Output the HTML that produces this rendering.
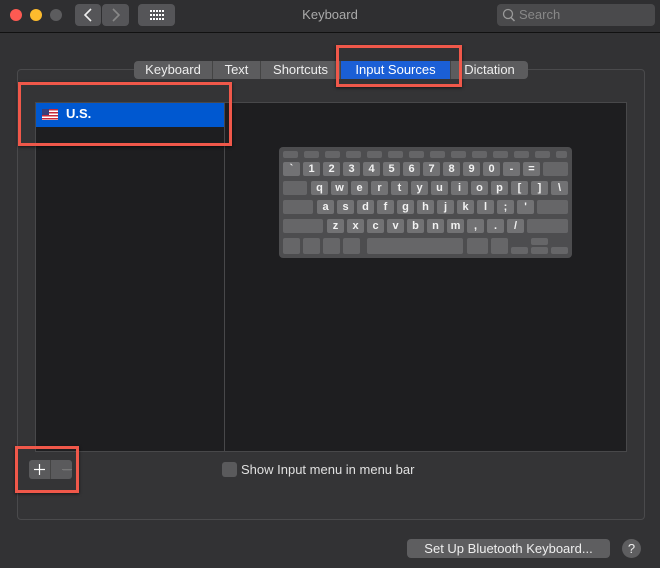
<!DOCTYPE html>
<html><head><meta charset="utf-8"><style>
*{box-sizing:border-box;margin:0;padding:0}
body{width:660px;height:568px;background:#323234;font-family:"Liberation Sans",sans-serif;position:relative;overflow:hidden;color:#ddd}
.a{position:absolute}
.tb{left:0;top:0;width:660px;height:33px;background:#2f2f31;border-bottom:1px solid #111}
.dot{width:12px;height:12px;border-radius:50%;top:9px}
.btn{background:#555558;border-radius:4px}
.panel{left:17px;top:69px;width:628px;height:451px;border:1px solid #4a4a4c;border-radius:4px;background:#343436}
.tabs{left:134px;top:61px;height:18px;display:flex;border-radius:4px;overflow:hidden;background:#5c5c5e;font-size:13px;color:#eee}
.tabs div{height:18px;line-height:18px;text-align:center;border-right:1px solid #444}
.red{border:3px solid #f0584a;box-shadow:0 1px 3px rgba(0,0,0,.6)}
.kb{left:279px;top:147px;width:293px;height:111px;background:#4d4d4f;border-radius:4px}
.k{position:absolute;height:14px;background:#727274;border-radius:2px;color:#f2f2f2;font-size:11px;font-weight:bold;text-align:center;line-height:14px;width:17px}
.f{height:7px;top:4px;width:15px;background:#656567}
</style></head><body>
<div class="a tb"></div>
<div class="a dot" style="left:10px;background:#fd5a52"></div>
<div class="a dot" style="left:30px;background:#fdbb2d"></div>
<div class="a dot" style="left:50px;background:#5c5c5e"></div>
<div class="a btn" style="left:75px;top:4px;width:26px;height:22px"></div>
<div class="a btn" style="left:102px;top:4px;width:27px;height:22px"></div>
<svg class="a" style="left:75px;top:4px" width="54" height="22"><polyline points="16,5 10,11 16,17" stroke="#eee" stroke-width="1.6" fill="none"/><polyline points="38,5 44,11 38,17" stroke="#888" stroke-width="1.6" fill="none"/></svg>
<div class="a btn" style="left:138px;top:4px;width:37px;height:22px"></div>
<svg class="a" style="left:150px;top:10px" width="14" height="10" fill="#fff"><g>
<rect x="0" y="0" width="2" height="2"/><rect x="3" y="0" width="2" height="2"/><rect x="6" y="0" width="2" height="2"/><rect x="9" y="0" width="2" height="2"/><rect x="12" y="0" width="2" height="2"/>
<rect x="0" y="4" width="2" height="2"/><rect x="3" y="4" width="2" height="2"/><rect x="6" y="4" width="2" height="2"/><rect x="9" y="4" width="2" height="2"/><rect x="12" y="4" width="2" height="2"/>
<rect x="0" y="8" width="2" height="2"/><rect x="3" y="8" width="2" height="2"/><rect x="6" y="8" width="2" height="2"/><rect x="9" y="8" width="2" height="2"/><rect x="12" y="8" width="2" height="2"/></g></svg>
<div class="a" style="left:280px;top:7px;width:100px;text-align:center;font-size:13px;color:#aaa">Keyboard</div>
<div class="a" style="left:497px;top:4px;width:158px;height:22px;background:#4a4a4c;border-radius:4px"></div>
<svg class="a" style="left:502px;top:8px" width="14" height="14"><circle cx="6" cy="6" r="4.5" stroke="#999" stroke-width="1.3" fill="none"/><line x1="9" y1="9.5" x2="12.5" y2="13" stroke="#999" stroke-width="1.5"/></svg>
<div class="a" style="left:519px;top:7px;font-size:13px;color:#888">Search</div>

<div class="a panel"></div>
<div class="a tabs">
<div style="width:79px">Keyboard</div><div style="width:48px">Text</div><div style="width:80px">Shortcuts</div><div style="width:110px;background:#1b5fd6;color:#fff">Input Sources</div><div style="width:77px;border:none">Dictation</div>
</div>
<div class="a red" style="left:336px;top:45px;width:126px;height:42px"></div>

<div class="a" style="left:35px;top:102px;width:592px;height:350px;background:#1e1e20;border:1px solid #48484a"></div>
<div class="a" style="left:224px;top:102px;width:1px;height:350px;background:#48484a"></div>
<div class="a" style="left:36px;top:103px;width:188px;height:24px;background:#0058d0"></div>
<svg class="a" style="left:42px;top:109px" width="16" height="11"><rect width="16" height="11" fill="#fff"/><rect y="0" width="16" height="1.5" fill="#c8283a"/><rect y="3" width="16" height="1.5" fill="#c8283a"/><rect y="6" width="16" height="1.5" fill="#c8283a"/><rect y="9" width="16" height="1.5" fill="#c8283a"/><rect width="7" height="6" fill="#3a3f7a"/></svg>
<div class="a" style="left:66px;top:106px;font-size:13px;color:#fff;font-weight:bold">U.S.</div>
<div class="a red" style="left:18px;top:82px;width:214px;height:64px"></div>

<div class="a kb">
<div class="k f" style="left:4px"></div><div class="k f" style="left:25px"></div><div class="k f" style="left:46px"></div><div class="k f" style="left:67px"></div><div class="k f" style="left:88px"></div><div class="k f" style="left:109px"></div><div class="k f" style="left:130px"></div><div class="k f" style="left:151px"></div><div class="k f" style="left:172px"></div><div class="k f" style="left:193px"></div><div class="k f" style="left:214px"></div><div class="k f" style="left:235px"></div><div class="k f" style="left:256px"></div><div class="k f" style="left:277px;width:11px"></div>
<div style="position:absolute;top:15px;left:0">
<div class="k" style="left:4px">`</div><div class="k" style="left:24px">1</div><div class="k" style="left:44px">2</div><div class="k" style="left:64px">3</div><div class="k" style="left:84px">4</div><div class="k" style="left:104px">5</div><div class="k" style="left:124px">6</div><div class="k" style="left:144px">7</div><div class="k" style="left:164px">8</div><div class="k" style="left:184px">9</div><div class="k" style="left:204px">0</div><div class="k" style="left:224px">-</div><div class="k" style="left:244px">=</div><div class="k" style="left:264px;width:25px;background:#666668"></div>
</div>
<div style="position:absolute;top:34px;left:0">
<div class="k" style="left:4px;width:24px;background:#666668"></div><div class="k" style="left:32px">q</div><div class="k" style="left:52px">w</div><div class="k" style="left:72px">e</div><div class="k" style="left:92px">r</div><div class="k" style="left:112px">t</div><div class="k" style="left:132px">y</div><div class="k" style="left:152px">u</div><div class="k" style="left:172px">i</div><div class="k" style="left:192px">o</div><div class="k" style="left:212px">p</div><div class="k" style="left:232px">[</div><div class="k" style="left:252px">]</div><div class="k" style="left:272px">\</div>
</div>
<div style="position:absolute;top:53px;left:0">
<div class="k" style="left:4px;width:30px;background:#666668"></div><div class="k" style="left:38px">a</div><div class="k" style="left:58px">s</div><div class="k" style="left:78px">d</div><div class="k" style="left:98px">f</div><div class="k" style="left:118px">g</div><div class="k" style="left:138px">h</div><div class="k" style="left:158px">j</div><div class="k" style="left:178px">k</div><div class="k" style="left:198px">l</div><div class="k" style="left:218px">;</div><div class="k" style="left:238px">'</div><div class="k" style="left:258px;width:31px;background:#666668"></div>
</div>
<div style="position:absolute;top:72px;left:0">
<div class="k" style="left:4px;width:40px;background:#666668"></div><div class="k" style="left:48px">z</div><div class="k" style="left:68px">x</div><div class="k" style="left:88px">c</div><div class="k" style="left:108px">v</div><div class="k" style="left:128px">b</div><div class="k" style="left:148px">n</div><div class="k" style="left:168px">m</div><div class="k" style="left:188px">,</div><div class="k" style="left:208px">.</div><div class="k" style="left:228px">/</div><div class="k" style="left:248px;width:41px;background:#666668"></div>
</div>
<div style="position:absolute;top:91px;left:0">
<div class="k" style="left:4px;height:16px;background:#666668"></div><div class="k" style="left:24px;height:16px;background:#666668"></div><div class="k" style="left:44px;height:16px;background:#666668"></div><div class="k" style="left:64px;height:16px;background:#666668"></div><div class="k" style="left:88px;width:96px;height:16px;background:#666668"></div><div class="k" style="left:188px;width:21px;height:16px;background:#666668"></div><div class="k" style="left:212px;width:17px;height:16px;background:#666668"></div>
<div class="k" style="left:232px;top:9px;width:17px;height:7px;background:#666668"></div><div class="k" style="left:252px;width:17px;height:7px;background:#666668"></div><div class="k" style="left:252px;top:9px;width:17px;height:7px;background:#666668"></div><div class="k" style="left:272px;top:9px;width:17px;height:7px;background:#666668"></div>
</div>
</div>

<div class="a" style="left:29px;top:460px;width:43px;height:19px;background:#5a5a5c;border-radius:3px"></div>
<div class="a" style="left:50px;top:460px;width:1px;height:19px;background:#444"></div>
<svg class="a" style="left:29px;top:460px" width="43" height="19"><line x1="34" y1="10" x2="42" y2="10" stroke="#6e6e70" stroke-width="1"/><line x1="33" y1="9.5" x2="43" y2="9.5" stroke="#777" stroke-width="1"/><line x1="5" y1="9.5" x2="16" y2="9.5" stroke="#fff" stroke-width="1.2"/><line x1="10.5" y1="4" x2="10.5" y2="15" stroke="#fff" stroke-width="1.2"/></svg>
<div class="a red" style="left:15px;top:446px;width:64px;height:47px"></div>
<div class="a" style="left:222px;top:462px;width:15px;height:15px;background:#5a5a5c;border-radius:3px"></div>
<div class="a" style="left:241px;top:462px;font-size:13px;color:#e0e0e0">Show Input menu in menu bar</div>

<div class="a" style="left:407px;top:539px;width:203px;height:19px;background:#5e5e60;border-radius:4px;text-align:center;line-height:19px;font-size:13px;color:#eee">Set Up Bluetooth Keyboard...</div>
<div class="a" style="left:622px;top:539px;width:19px;height:19px;border-radius:50%;background:#5e5e60;text-align:center;line-height:19px;font-size:13px;color:#eee">?</div>
</body></html>
